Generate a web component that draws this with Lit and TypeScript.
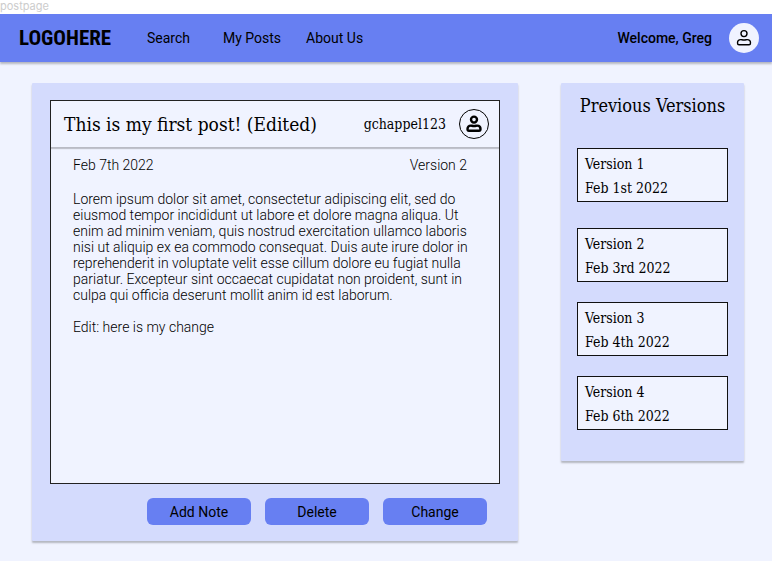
import { LitElement, html, css } from "lit";
import { customElement, property } from "lit/decorators.js";

@customElement("user-icon")
class UserIcon extends LitElement {
  @property({ type: Boolean }) bold = false;

  static styles = css`
    :host { display: block; width: 16px; height: 16px; }
    svg { display: block; width: 100%; height: 100%; overflow: visible; }
    path, circle { fill: none; stroke: #000; stroke-width: 1.4; stroke-linejoin: round; }
    .bold path, .bold circle { stroke-width: 2.4; }
  `;

  render() {
    return html`
      <svg class=${this.bold ? "bold" : ""} viewBox="0 0 16 16" aria-hidden="true">
        <circle cx="8" cy="3.6" r="3"></circle>
        <path d="M4.8 9.6C2.8 9.6 1.5 10.9 1.5 13C1.5 14.4 2 14.8 3 14.8H13C14 14.8 14.5 14.4 14.5 13C14.5 10.9 13.2 9.6 11.2 9.6C10.2 9.6 9.8 10 8 10C6.2 10 5.8 9.6 4.8 9.6Z"></path>
      </svg>
    `;
  }
}

@customElement("app-root")
class AppRoot extends LitElement {
  static styles = css`
    :host {
      display: block;
      min-height: 100vh;
      background: #f0f3ff;
      color: #000;
      font: 14px/16px Roboto, sans-serif;
      --slab: "Roboto Slab", "DejaVu Serif Condensed", "DejaVu Serif", serif;
    }
    * { box-sizing: border-box; }
    h1, h2, p, ul { margin: 0; padding: 0; font-weight: inherit; }
    a { color: inherit; text-decoration: none; }
    .tag {
      height: 14px;
      background: #fff;
      color: #ccc;
      font: 11px/12px Inter, sans-serif;
    }
    .bar {
      display: flex;
      align-items: center;
      height: 48px;
      padding: 0 13px 0 19px;
      background: #677ff2;
      box-shadow: 0 2px 2px rgba(0, 0, 0, 0.25);
    }
    .logo { width: 128px; font: 700 21px/24px "Roboto Condensed", Roboto, sans-serif; }
    .links { display: flex; flex: 1; }
    .links a:first-child { margin-right: 33px; }
    .links a + a { margin-right: 25px; }
    .welcome { margin-right: 17px; font-weight: 500; }
    .avatar {
      display: grid;
      place-items: center;
      width: 30px;
      height: 30px;
      padding: 0;
      border: 0;
      border-radius: 50%;
      background: #f0f3ff;
    }
    .page {
      display: flex;
      align-items: flex-start;
      gap: 43px;
      padding: 21px 28px 19px 32px;
    }
    .panel {
      border-radius: 1px;
      background: #d4dbfd;
      box-shadow: 0 2px 2px rgba(0, 0, 0, 0.25);
    }
    .main { flex: 1; padding: 17px 18px 16px; }
    .post { min-height: 384px; border: 1px solid #222; background: #f0f3ff; }
    .head {
      display: flex;
      align-items: center;
      height: 47px;
      padding: 0 10px 0 13px;
      border-bottom: 1px solid #b9bbc5;
      box-shadow: 0 1px 1px rgba(0, 0, 0, 0.2);
      font-family: var(--slab);
    }
    .head h1 { flex: 1; font-size: 19px; line-height: 24px; }
    .author { margin-right: 13px; }
    .ring { border: 1px solid #000; }
    .body { padding: 9px 20px 10px 22px; font-weight: 300; }
    .meta { display: flex; justify-content: space-between; margin-bottom: 18px; padding-right: 12px; }
    .text + .text { margin-top: 16px; }
    .actions {
      display: flex;
      justify-content: flex-end;
      gap: 14px;
      padding: 14px 13px 0 0;
    }
    .actions button {
      width: 104px;
      height: 27px;
      padding: 0;
      border: 0;
      border-radius: 6px;
      background: #677ff2;
      color: #000;
      font: inherit;
    }
    .side { width: 183px; padding: 11px 16px 31px; font-family: var(--slab); }
    .side h2 { font-size: 18px; line-height: 24px; text-align: center; white-space: nowrap; }
    .versions { display: grid; gap: 20px; margin-top: 30px; list-style: none; }
    .versions li:first-child { margin-bottom: 6px; }
    .versions a {
      display: block;
      height: 54px;
      padding: 3px 7px;
      border: 1px solid #111;
      background: #f0f3ff;
      line-height: 24px;
    }
    .versions span { display: block; }
  `;

  private versions = [
    { name: "Version 1", date: "Feb 1st 2022" },
    { name: "Version 2", date: "Feb 3rd 2022" },
    { name: "Version 3", date: "Feb 4th 2022" },
    { name: "Version 4", date: "Feb 6th 2022" },
  ];

  render() {
    return html`
      <div class="tag">postpage</div>
      <header class="bar">
        <a class="logo" href="#">LOGOHERE</a>
        <nav class="links">
          <a href="#search">Search</a>
          <a href="#posts">My Posts</a>
          <a href="#about">About Us</a>
        </nav>
        <span class="welcome">Welcome, Greg</span>
        <button class="avatar" aria-label="Account"><user-icon></user-icon></button>
      </header>
      <div class="page">
        <main class="panel main">
          <article class="post">
            <header class="head">
              <h1>This is my first post! (Edited)</h1>
              <span class="author">gchappel123</span>
              <a class="avatar ring" href="#author" aria-label="gchappel123"><user-icon bold></user-icon></a>
            </header>
            <div class="body">
              <div class="meta"><span>Feb 7th 2022</span><span>Version 2</span></div>
              <p class="text">
                Lorem ipsum dolor sit amet, consectetur adipiscing elit, sed do eiusmod tempor
                incididunt ut labore et dolore magna aliqua. Ut enim ad minim veniam, quis nostrud
                exercitation ullamco laboris nisi ut aliquip ex ea commodo consequat. Duis aute
                irure dolor in reprehenderit in voluptate velit esse cillum dolore eu fugiat nulla
                pariatur. Excepteur sint occaecat cupidatat non proident, sunt in culpa qui officia
                deserunt mollit anim id est laborum.
              </p>
              <p class="text">Edit: here is my change</p>
            </div>
          </article>
          <div class="actions">
            <button>Add Note</button>
            <button>Delete</button>
            <button>Change</button>
          </div>
        </main>
        <aside class="panel side">
          <h2>Previous Versions</h2>
          <ul class="versions">
            ${this.versions.map(
              (v) => html`<li><a href="#"><span>${v.name}</span><span>${v.date}</span></a></li>`,
            )}
          </ul>
        </aside>
      </div>
    `;
  }
}
